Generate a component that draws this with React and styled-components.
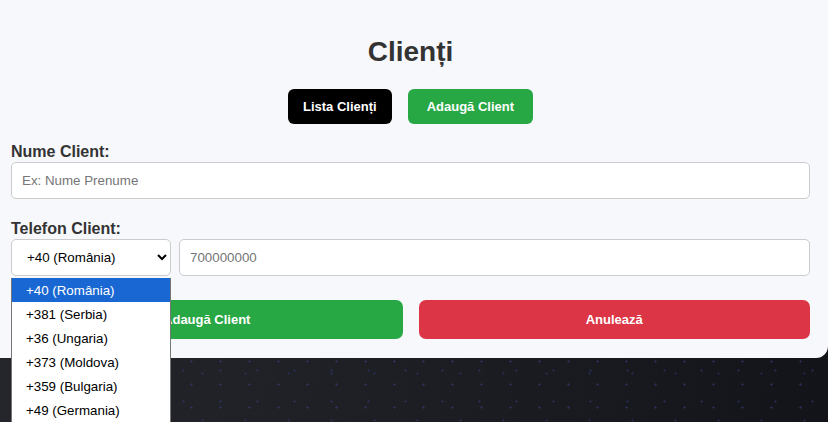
import React from "react";
import styled, { createGlobalStyle } from "styled-components";

const GlobalStyle = createGlobalStyle`
  html, body {
    margin: 0;
    padding: 0;
    height: 100%;
  }
  body {
    font-family: "Liberation Sans", Arial, sans-serif;
    background-color: #1b1c21;
    background-image:
      radial-gradient(circle, rgba(58, 66, 150, 0.5) 0.9px, transparent 1.4px),
      radial-gradient(circle, rgba(58, 66, 150, 0.4) 0.9px, transparent 1.4px),
      radial-gradient(circle, rgba(58, 66, 150, 0.35) 0.9px, transparent 1.4px),
      linear-gradient(100deg, #25272d 0%, #1d1f24 50%, #131419 100%);
    background-size: 29px 23px, 37px 31px, 43px 47px, 100% 100%;
    background-position: 3px 5px, 17px 14px, 9px 21px, 0 0;
    overflow: hidden;
  }
  #root {
    min-height: 100%;
  }
`;

const Page = styled.div`
  position: relative;
  width: 828px;
  height: 422px;
`;

const Card = styled.section`
  background: #f7f8fc;
  padding: 36px 18px 19px 11px;
  border-radius: 0 0 12px 0;
`;

const Title = styled.h2`
  margin: 0 0 21px;
  text-align: center;
  font-size: 28px;
  line-height: 32px;
  font-weight: bold;
  color: #333;
`;

const Tabs = styled.div`
  display: flex;
  justify-content: center;
  gap: 16px;
  margin-bottom: 19px;
`;

const TabButton = styled.button`
  height: 35px;
  padding: 0 ${(p) => (p.$dark ? "15px" : "19px")};
  border: none;
  border-radius: 6px;
  background: ${(p) => (p.$dark ? "#000" : "#28a745")};
  color: #fff;
  font-family: "Liberation Sans", Arial, sans-serif;
  font-size: 13px;
  font-weight: bold;
`;

const Group = styled.div`
  display: flex;
  flex-direction: column;
  margin-bottom: ${(p) => p.$gap || "0"};
`;

const Label = styled.label`
  font-size: 16px;
  line-height: 18px;
  font-weight: bold;
  color: #333;
  margin-bottom: ${(p) => p.$gap || "1px"};
`;

const Input = styled.input`
  box-sizing: border-box;
  height: 37px;
  width: 100%;
  padding: 0 10px;
  border: 1px solid #ccc;
  border-radius: 5px;
  background: #fff;
  font-family: "Liberation Sans", Arial, sans-serif;
  font-size: 13.33px;
  color: #333;
  outline: none;
  &::placeholder {
    color: #767676;
  }
`;

const PhoneRow = styled.div`
  display: flex;
  gap: 8px;
`;

const Select = styled.select`
  box-sizing: border-box;
  flex: 0 0 160px;
  height: 37px;
  padding: 0 8px 0 11px;
  border: 1px solid #ccc;
  border-radius: 5px;
  background: #fff;
  font-family: "Liberation Sans", Arial, sans-serif;
  font-size: 13.33px;
  color: #000;
  outline: none;
`;

const Actions = styled.div`
  display: grid;
  grid-template-columns: 1fr 1fr;
  gap: 16px;
  margin-top: 24px;
`;

const ActionButton = styled.button`
  height: 39px;
  border: none;
  border-radius: 7px;
  background: ${(p) => (p.$danger ? "#dc3545" : "#28a745")};
  color: #fff;
  font-family: "Liberation Sans", Arial, sans-serif;
  font-size: 13px;
  font-weight: bold;
`;

const Dropdown = styled.ul`
  position: absolute;
  left: 11px;
  top: 278px;
  width: 160px;
  box-sizing: border-box;
  margin: 0;
  padding: 0;
  list-style: none;
  background: #fff;
  border: 1px solid #767676;
  border-top: none;
  border-bottom: none;
`;

const Option = styled.li`
  height: 24px;
  line-height: 26px;
  padding-left: 14px;
  font-size: 13.33px;
  color: ${(p) => (p.$active ? "#fff" : "#000")};
  background: ${(p) => (p.$active ? "#1967d2" : "#fff")};
`;

const countries = [
  "+40 (România)",
  "+381 (Serbia)",
  "+36 (Ungaria)",
  "+373 (Moldova)",
  "+359 (Bulgaria)",
  "+49 (Germania)",
];

export default function App() {
  return (
    <Page>
      <GlobalStyle />
      <Card>
        <Title>Clienți</Title>
        <Tabs>
          <TabButton $dark>Lista Clienți</TabButton>
          <TabButton>Adaugă Client</TabButton>
        </Tabs>

        <Group $gap="21px">
          <Label>Nume Client:</Label>
          <Input placeholder="Ex: Nume Prenume" />
        </Group>

        <Group>
          <Label>Telefon Client:</Label>
          <PhoneRow>
            <Select defaultValue="+40">
              {countries.map((c) => (
                <option key={c} value={c.split(" ")[0]}>
                  {c}
                </option>
              ))}
            </Select>
            <Input placeholder="700000000" />
          </PhoneRow>
        </Group>

        <Actions>
          <ActionButton>Adaugă Client</ActionButton>
          <ActionButton $danger>Anulează</ActionButton>
        </Actions>
      </Card>

      <Dropdown>
        {countries.map((c, i) => (
          <Option key={c} $active={i === 0}>
            {c}
          </Option>
        ))}
      </Dropdown>
    </Page>
  );
}
